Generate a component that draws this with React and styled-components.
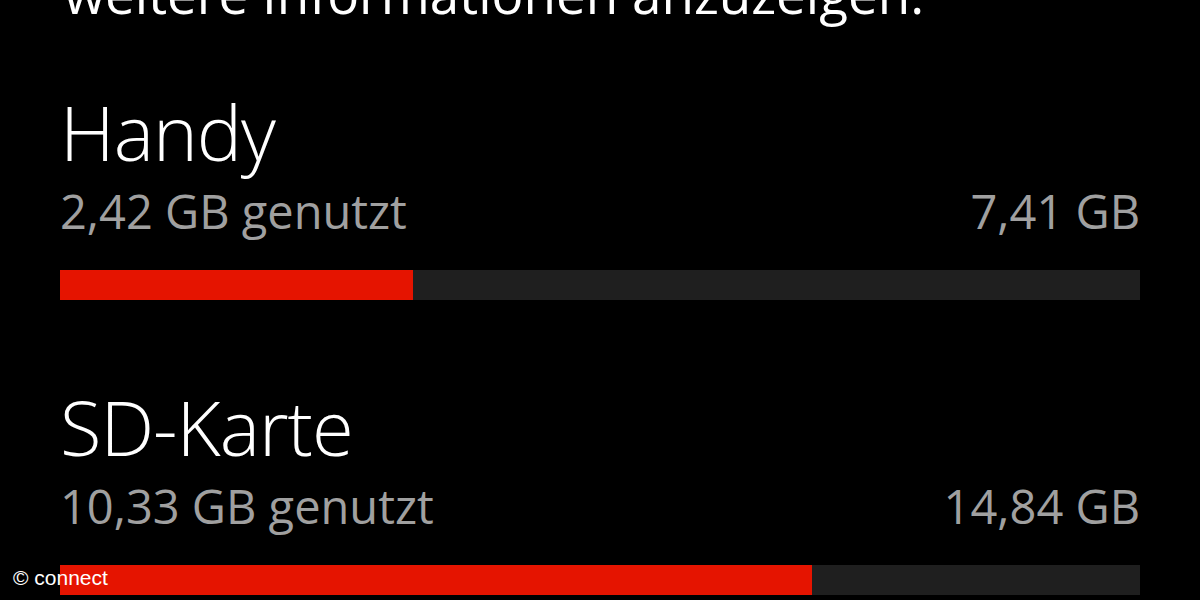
import React from "react";
import styled, { createGlobalStyle } from "styled-components";

const GlobalStyle = createGlobalStyle`
  html, body {
    margin: 0;
    padding: 0;
    background: #000000;
  }
  #root {
    width: 1200px;
    height: 600px;
    overflow: hidden;
  }
`;

const storages = [
  { name: "Handy", used: "2,42 GB genutzt", total: "7,41 GB", ratio: 0.327 },
  { name: "SD-Karte", used: "10,33 GB genutzt", total: "14,84 GB", ratio: 0.696 },
];

const App = () => {
  return (
    <>
      <GlobalStyle />
      <Screen>
        <Intro>weitere Informationen anzuzeigen.</Intro>
        {storages.map((s) => (
          <Storage key={s.name}>
            <Title>{s.name}</Title>
            <InfoRow>
              <span>{s.used}</span>
              <span>{s.total}</span>
            </InfoRow>
            <Track>
              <Fill style={{ width: `${s.ratio * 100}%` }} />
            </Track>
          </Storage>
        ))}
        <Watermark>© connect</Watermark>
      </Screen>
    </>
  );
};

export default App;

const Screen = styled.div`
  position: relative;
  width: 1200px;
  height: 600px;
  background: #000000;
  padding: 0 60px;
  box-sizing: border-box;
  display: flex;
  flex-direction: column;
  font-family: "Open Sans", "Noto Sans", sans-serif;
  color: #ffffff;
  overflow: hidden;
`;

const Intro = styled.div`
  flex-shrink: 0;
  font-size: 53px;
  font-weight: 400;
  line-height: 60px;
  margin-top: -36px;
  margin-left: 4px;
  white-space: nowrap;
`;

const Storage = styled.section`
  flex-shrink: 0;
  display: flex;
  flex-direction: column;
  margin-top: 64px;
  & + & {
    margin-top: 83px;
  }
`;

const Title = styled.h2`
  margin: 0;
  font-size: 76px;
  font-weight: 300;
  line-height: 88px;
  letter-spacing: -1px;
`;

const InfoRow = styled.div`
  display: flex;
  justify-content: space-between;
  font-size: 47px;
  font-weight: 400;
  line-height: 56px;
  color: #a0a0a0;
  margin-top: 7px;
`;

const Track = styled.div`
  height: 30px;
  margin-top: 31px;
  background: #1f1f1f;
`;

const Fill = styled.div`
  height: 100%;
  background: #e51400;
`;

const Watermark = styled.div`
  position: absolute;
  left: 13px;
  bottom: 10px;
  font-family: "Liberation Sans", Arial, sans-serif;
  font-size: 21px;
  color: #ffffff;
`;
